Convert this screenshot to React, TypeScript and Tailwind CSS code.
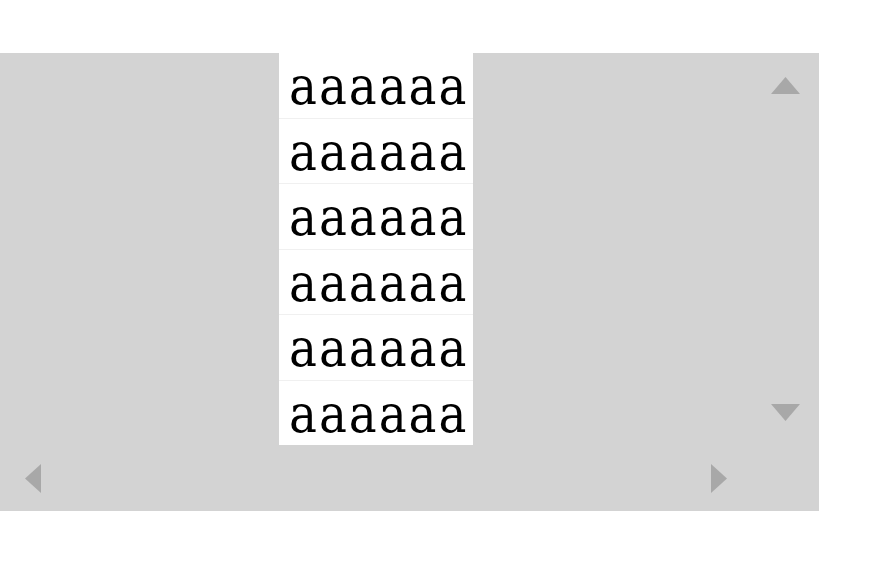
import React from 'react';

const rows = ['aaaaaa', 'aaaaaa', 'aaaaaa', 'aaaaaa', 'aaaaaa', 'aaaaaa'];

// 스크롤 화살표
function Arrow({ dir }: { dir: 'up' | 'down' | 'left' | 'right' }) {
  if (dir === 'up' || dir === 'down') {
    return (
      <svg width="29" height="17" viewBox="0 0 29 17" className="block">
        <polygon points={dir === 'up' ? '14.5,0 29,17 0,17' : '0,0 29,0 14.5,17'} fill="#a8a8a8" />
      </svg>
    );
  }
  return (
    <svg width="16" height="29" viewBox="0 0 16 29" className="block">
      <polygon points={dir === 'left' ? '16,0 16,29 0,14.5' : '0,0 16,14.5 0,29'} fill="#a8a8a8" />
    </svg>
  );
}

export default function App() {
  return (
    <div className="w-[884px] h-[564px] bg-white pt-[53px]">
      <div className="w-[819px] h-[458px] bg-[#d3d3d3] flex flex-col">
        <div className="flex h-[392px]">
          {/* 콘텐츠 영역 */}
          <div className="w-[752px] flex justify-center">
            <div className="w-[194px] bg-white flex flex-col">
              {rows.map((r, i) => (
                <div
                  key={i}
                  className={`flex-1 pl-[10px] pt-[2px] flex items-center text-[52px] tracking-[2px] leading-none text-black ${i > 0 ? 'border-t border-[#f0f0f0]' : ''}`}
                  style={{ fontFamily: '"DejaVu Serif Condensed", "DejaVu Serif", serif' }}
                >
                  {r}
                </div>
              ))}
            </div>
          </div>
          {/* 세로 스크롤바 */}
          <div className="w-[67px] flex flex-col items-center justify-between py-[24px]">
            <Arrow dir="up" />
            <Arrow dir="down" />
          </div>
        </div>
        {/* 가로 스크롤바 */}
        <div className="w-[752px] h-[66px] flex items-center justify-between px-[25px]">
          <Arrow dir="left" />
          <Arrow dir="right" />
        </div>
      </div>
    </div>
  );
}
